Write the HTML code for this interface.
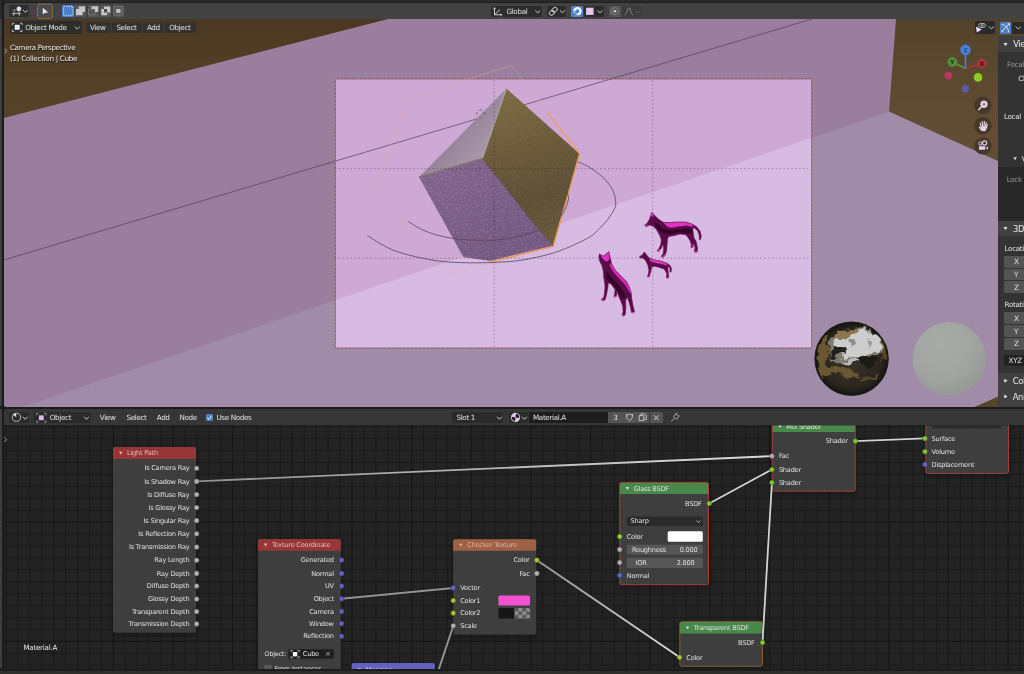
<!DOCTYPE html><html><head><meta charset="utf-8"><title>Blender</title><style>
html,body{margin:0;padding:0;background:#1b1b1b;}
body{width:1024px;height:674px;overflow:hidden;position:relative;font-family:'DejaVu Sans','Liberation Sans',sans-serif;font-size:6.7px;color:#e3e3e3;letter-spacing:-0.05px}
.abs{position:absolute}
svg{position:absolute;left:0;top:0}
svg text{font-family:'DejaVu Sans','Liberation Sans',sans-serif;letter-spacing:-0.22px}
</style></head><body><div id="root" style="position:absolute;left:0;top:0;width:1024px;height:674px;will-change:transform"><svg width="1024" height="410" viewBox="0 0 1024 410"><clipPath id="vpc"><path d="M3.8 18H1030V406.9H6.3a2.5 2.5 0 0 1 -2.5 -2.5Z"/></clipPath><g clip-path="url(#vpc)"><rect x="3.7" y="2.3" width="1021" height="405" fill="#997e9e"/><polygon points="22,407.2 335,300.3 889,111.6 998.5,161.3 1024,172 1024,407.2" fill="#a08ba9"/><defs><linearGradient id="gbl" x1="0" y1="19" x2="0" y2="118" gradientUnits="userSpaceOnUse"><stop offset="0" stop-color="#4a3822"/><stop offset="0.5" stop-color="#513f27"/><stop offset="1" stop-color="#554329"/></linearGradient><linearGradient id="gbr" x1="0" y1="19" x2="0" y2="170" gradientUnits="userSpaceOnUse"><stop offset="0" stop-color="#53422b"/><stop offset="0.6" stop-color="#604c32"/><stop offset="1" stop-color="#624e34"/></linearGradient></defs><polygon points="3.7,19 388,19 3.7,118" fill="url(#gbl)"/><polygon points="896,19 1024,19 1024,173 998.5,161.3 889,111.6" fill="url(#gbr)"/><clipPath id="cam"><rect x="335.7" y="79.2" width="475.5" height="268.2"/></clipPath><g clip-path="url(#cam)"><rect x="335" y="79" width="477" height="269" fill="#cfa9d6"/><polygon points="300,312.2 889,111.6 889,360 300,360" fill="#d8bbe3"/></g><line x1="3.7" y1="260" x2="812" y2="19" stroke="#53405a" stroke-width="0.7"/><rect x="335.3" y="78.8" width="476.4" height="269.3" fill="none" stroke="#4c3a58" stroke-width="0.9" opacity="0.6"/><rect x="335.3" y="78.8" width="476.4" height="269.3" fill="none" stroke="#e08c58" stroke-width="1" stroke-dasharray="1.3,2.6"/><defs><linearGradient id="gol" x1="506" y1="89" x2="556" y2="245" gradientUnits="userSpaceOnUse"><stop offset="0" stop-color="#7d6c44"/><stop offset="0.4" stop-color="#6a5a39"/><stop offset="0.7" stop-color="#5d4e35"/><stop offset="1" stop-color="#6d5d3b"/></linearGradient><linearGradient id="ggr" x1="483" y1="158" x2="440" y2="120" gradientUnits="userSpaceOnUse"><stop offset="0" stop-color="#a997ab"/><stop offset="1" stop-color="#8a798d"/></linearGradient><linearGradient id="gpu" x1="450" y1="165" x2="500" y2="260" gradientUnits="userSpaceOnUse"><stop offset="0" stop-color="#7e6289"/><stop offset="1" stop-color="#73587f"/></linearGradient><filter id="spk" x="0" y="0" width="100%" height="100%"><feTurbulence type="fractalNoise" baseFrequency="0.55" numOctaves="2" seed="3"/><feColorMatrix type="matrix" values="0 0 0 0 0.75  0 0 0 0 0.62  0 0 0 0 0.8  0 0 0 2.2 -1.05"/></filter><clipPath id="cpu"><polygon points="482.3,158.4 534.8,225.0 552.6,245.5 490.0,260.4 463.6,256.8 419.3,176.8"/></clipPath><clipPath id="col"><polygon points="506.2,88.7 578.9,153.6 552.6,245.5 534.8,225.0 482.3,158.4"/></clipPath></defs><polygon points="506.2,88.7 578.9,153.6 552.6,245.5 534.8,225.0 482.3,158.4" fill="url(#gol)" stroke="url(#gol)" stroke-width="0.6" stroke-linejoin="round"/><polygon points="506.2,88.7 482.3,158.4 419.3,176.8" fill="url(#ggr)"/><polygon points="482.3,158.4 534.8,225.0 552.6,245.5 490.0,260.4 463.6,256.8 419.3,176.8" fill="url(#gpu)" stroke="#775b83" stroke-width="0.8" stroke-linejoin="round"/><g clip-path="url(#cpu)"><rect x="415" y="155" width="145" height="110" filter="url(#spk)" opacity="0.3"/></g><g clip-path="url(#col)"><rect x="480" y="85" width="100" height="165" filter="url(#spk)" opacity="0.12"/></g><path d="M506.2 88.7L482.3 158.4" stroke="#a9aaa0" stroke-width="1.4" opacity="0.85"/><path d="M482.3 158.4L419.3 176.8" stroke="#8f8060" stroke-width="1.3" opacity="0.6"/><path d="M482.3 158.4L534.8 225.0L552.6 245.5" stroke="#4c3f30" stroke-width="0.9" opacity="0.5" fill="none"/><polyline points="547.5,112.5 579.8,153.6 553.4,246.4 488.5,262.6" fill="none" stroke="#ee9a50" stroke-width="1.3" stroke-linejoin="round"/><g stroke="#1a0a20" stroke-width="0.9" stroke-dasharray="1.5,2.4" fill="none" opacity="0.36"><line x1="494.2" y1="80" x2="494.2" y2="348"/><line x1="652.7" y1="80" x2="652.7" y2="348"/><line x1="335" y1="168.7" x2="811" y2="168.7"/><line x1="335" y1="258.2" x2="811" y2="258.2"/></g><polyline points="578.9,154 548,113 511.4,65.3 409,97.8 375.7,186.8 446.9,272.7 491.4,262.5" fill="none" stroke="#f0a890" stroke-width="0.8" opacity="0.55"/><path d="M367.3 235.3C369.4 236.7 375.2 240.8 380.0 243.5C384.8 246.2 389.7 248.9 396.0 251.2C402.3 253.5 410.7 255.6 418.0 257.3C425.3 259.0 433.0 260.3 440.0 261.2C447.0 262.1 453.3 262.3 460.0 262.6C466.7 262.9 473.3 262.9 480.0 262.8C486.7 262.7 493.3 262.5 500.0 262.1C506.7 261.7 512.5 261.5 520.0 260.4C527.5 259.3 537.5 257.2 545.0 255.3C552.5 253.4 557.9 251.7 565.2 248.7C572.5 245.7 583.3 240.8 589.0 237.5C594.7 234.2 596.2 231.6 599.3 228.6C602.4 225.6 605.0 222.9 607.5 219.7C610.0 216.5 612.8 212.2 614.2 209.3C615.6 206.4 616.0 205.2 615.7 202.0C615.5 198.8 614.7 194.0 612.7 190.0C610.7 186.0 607.5 181.9 603.8 178.2C600.1 174.5 594.7 170.5 590.4 167.8C586.1 165.1 579.9 162.9 577.8 161.9" fill="none" stroke="#54465a" stroke-width="0.8"/><path d="M408.3 221.6C410.1 222.7 415.1 226.0 419.0 228.0C422.9 230.0 426.8 231.8 431.6 233.4C436.4 235.0 442.5 236.4 448.0 237.5C453.5 238.6 457.1 239.2 464.4 239.7C471.7 240.1 484.4 240.4 491.7 240.2C499.0 240.0 502.5 239.5 508.0 238.6C513.5 237.7 519.3 236.3 524.5 234.8C529.7 233.3 534.4 231.6 539.0 229.5C543.6 227.4 548.0 225.0 551.9 222.5C555.8 220.0 559.6 218.2 562.3 214.5C565.0 210.8 567.3 203.8 568.2 200.4C569.1 197.0 568.1 195.7 567.5 194.0C566.9 192.3 565.0 190.7 564.5 190.0" fill="none" stroke="#54465a" stroke-width="0.8"/><circle cx="480.5" cy="113.6" r="3.8" fill="none" stroke="#5a4456" stroke-width="0.8" stroke-dasharray="1.5,1.5"/><circle cx="480.5" cy="113.6" r="3.8" fill="none" stroke="#f4e8f4" stroke-width="0.8" stroke-dasharray="1.5,1.5" stroke-dashoffset="1.5" opacity="0.75"/><path d="M480.5 108.6v2.6M480.5 116v2.6M475.5 113.6h2.6M482.9 113.6h2.6" stroke="#5a4456" stroke-width="0.5" opacity="0.7"/><g transform="translate(636 205) scale(0.08157)"><path d="M195 90L240 140L290 185L340 215L420 215L520 208L620 210L690 235L740 265L785 320L800 380L790 425L775 420L775 370L755 315L715 280L695 290L700 330L710 400L740 455L755 540L750 575L720 580L715 555L725 530L715 480L700 470L705 500L690 525L670 515L680 490L665 440L640 400L610 365L540 355L470 375L400 385L385 420L380 500L375 560L355 620L330 645L310 630L335 590L340 540L335 480L325 500L300 545L275 570L258 560L285 530L305 480L310 420L290 370L250 300L215 265L170 245L130 265L105 250L140 220L165 175L180 130Z" fill="#5a0c48" stroke="#6a1056" stroke-width="8" stroke-linejoin="round"/><path d="M210 215L260 225L330 290L400 310L520 300L640 285L690 300L690 350L610 345L520 335L420 360L340 350L270 300Z" fill="#2a0422" opacity="0.85"/><path d="M340 222L420 220L520 213L620 214L690 240L705 268L620 252L520 264L440 278L385 268Z" fill="#e232c2"/><path d="M195 92L215 125L200 150L182 130Z" fill="#e232c2"/><path d="M120 252l25 -6M330 632l22 -14M268 558l22 -12M722 572l22 -10M680 512l18 -8" stroke="#e232c2" stroke-width="14" stroke-linecap="round"/></g><g transform="translate(590 245) scale(0.11123)"><path d="M85 80L120 100L170 60L180 110L195 170L230 230L290 290L330 330L355 380L370 430L375 480L385 540L400 600L390 612L372 605L365 560L350 510L335 470L320 500L322 560L318 620L305 640L288 632L298 600L295 550L280 510L262 470L250 440L245 400L240 440L235 465L215 468L222 440L225 400L190 350L165 340L160 380L150 440L135 495L115 500L100 490L125 470L132 420L135 360L125 300L120 240L110 190L85 140L80 100Z" fill="#5a0c48" stroke="#6a1056" stroke-width="6" stroke-linejoin="round"/><path d="M150 230L200 300L260 360L300 420L330 470L290 480L255 430L215 370L170 330L140 290Z" fill="#2a0422" opacity="0.8"/><path d="M88 84L120 104L168 66L176 128L150 150L120 130Z" fill="#e232c2"/><path d="M186 160L230 232L290 292L332 334L356 384L372 440L352 420L318 360L270 310L215 250L175 185Z" fill="#d62ab8"/><path d="M490 62L505 85L530 115L580 135L640 145L690 165L715 180L733 210L728 245L718 240L720 210L705 190L700 215L705 260L708 290L695 300L685 292L692 265L680 235L665 215L620 200L580 190L555 195L548 230L538 268L530 288L515 285L525 262L530 225L520 180L500 140L480 118L450 115L445 105L470 90Z" fill="#5a0c48" stroke="#6a1056" stroke-width="6" stroke-linejoin="round"/><path d="M530 118L580 138L640 148L690 168L700 186L640 170L585 160L545 148Z" fill="#e232c2"/><path d="M108 492l18 2M292 632l16 2M376 606l16 2M218 464l14 0M518 284l12 2M688 294l14 2" stroke="#e232c2" stroke-width="10" stroke-linecap="round"/></g><polygon points="974.5,407 998.5,396.5 1024,386 1024,407" fill="#56452d"/><defs><radialGradient id="gw" cx="0.38" cy="0.3" r="0.8"><stop offset="0" stop-color="#a9aba8"/><stop offset="0.6" stop-color="#a1a3a1"/><stop offset="1" stop-color="#939593"/></radialGradient><radialGradient id="gh" cx="0.5" cy="0.5" r="0.5"><stop offset="0" stop-color="#3a342a"/><stop offset="0.8" stop-color="#2a261e"/><stop offset="0.93" stop-color="#1c1a16"/><stop offset="1" stop-color="#15130f"/></radialGradient><clipPath id="hc"><circle cx="851.6" cy="358.8" r="36.8"/></clipPath><filter id="b1" x="-30%" y="-30%" width="160%" height="160%"><feGaussianBlur stdDeviation="1.6"/></filter></defs><defs><filter id="rag" x="-30%" y="-30%" width="160%" height="160%"><feTurbulence type="fractalNoise" baseFrequency="0.09" numOctaves="3" seed="7" result="t"/><feDisplacementMap in="SourceGraphic" in2="t" scale="14" xChannelSelector="R" yChannelSelector="G"/><feGaussianBlur stdDeviation="0.5"/></filter></defs><circle cx="851.6" cy="358.8" r="36.8" fill="url(#gh)"/><g clip-path="url(#hc)"><g filter="url(#rag)"><ellipse cx="822" cy="358" rx="5" ry="20" fill="#6a5630"/><ellipse cx="840" cy="372" rx="20" ry="4.5" fill="#6a5630" transform="rotate(10 840 372)"/><ellipse cx="868" cy="378" rx="12" ry="2.5" fill="#54452a" transform="rotate(-12 868 378)"/><ellipse cx="884" cy="352" rx="3" ry="12" fill="#5a4828"/><ellipse cx="855" cy="346" rx="28" ry="17" fill="#7e7a70" transform="rotate(-6 855 346)"/><ellipse cx="858" cy="344" rx="24" ry="13" fill="#cdcdcd" transform="rotate(-6 858 344)"/><ellipse cx="846" cy="334" rx="13" ry="4" fill="#8a7650" transform="rotate(-18 846 334)"/><ellipse cx="836" cy="352" rx="7" ry="5" fill="#24221e"/><ellipse cx="851" cy="343" rx="5" ry="3" fill="#8e8e8a"/><ellipse cx="870" cy="340" rx="4" ry="3" fill="#9a9a96"/><ellipse cx="866" cy="362" rx="13" ry="5" fill="#1c1a17"/><ellipse cx="850" cy="362" rx="6" ry="3" fill="#b8b8b6"/></g></g><circle cx="851.6" cy="358.8" r="36.2" fill="none" stroke="#1a1814" stroke-width="2" opacity="0.85"/><circle cx="949.3" cy="358.8" r="36.8" fill="url(#gw)"/></g></svg>
<div class="abs" style="left:0;top:0;width:1024px;height:3.2px;background:linear-gradient(#2b2b2b 0,#2b2b2b 1.5px,#1c1c1c 2.4px)"></div>
<div class="abs" style="left:3.8px;top:3px;width:1021px;height:16px;background:#424242;border-radius:2.5px 0 0 0"></div>
<div class="abs" style="left:0;top:0;width:3.7px;height:674px;background:#1b1b1b"></div>
<div class="abs" style="left:998.4px;top:36.3px;width:26px;height:370.6px;background:#333333"></div>
<div class="abs" style="left:998.4px;top:36.3px;width:26px;height:16px;background:#3f3f3f"></div>
<div class="abs" style="left:998.4px;top:166.9px;width:26px;height:54.6px;background:#282828"></div>
<div class="abs" style="left:9.0px;top:5.2px;width:20.0px;height:11.4px;background:#2f2f2f;border-radius:2.0px;"></div>
<div class="abs" style="left:38.0px;top:4.4px;width:14.0px;height:13.8px;background:#4b4b4b;border-radius:1.5px;"></div>
<div class="abs" style="left:62.4px;top:5.3px;width:11.8px;height:11.5px;background:#4c80cc;border-radius:1.5px;"></div>
<div class="abs" style="left:75.1px;top:5.3px;width:11.2px;height:11.5px;background:#565656;border-radius:0.5px;"></div>
<div class="abs" style="left:87.6px;top:5.3px;width:11.2px;height:11.5px;background:#565656;border-radius:0.5px;"></div>
<div class="abs" style="left:100.1px;top:5.3px;width:11.2px;height:11.5px;background:#565656;border-radius:0.5px;"></div>
<div class="abs" style="left:112.6px;top:5.3px;width:11.2px;height:11.5px;background:#565656;border-radius:1.5px;"></div>
<div class="abs" style="left:490.7px;top:5.5px;width:51.4px;height:11.5px;background:#2c2c2c;border-radius:2.0px;"></div>
<div class="abs" style="left:506.5px;top:7px;font-size:7.20px;line-height:9px;letter-spacing:-0.35px;color:#e3e3e3;white-space:nowrap;">Global</div>
<div class="abs" style="left:547.0px;top:5.5px;width:19.3px;height:11.5px;background:#2c2c2c;border-radius:2.0px;"></div>
<div class="abs" style="left:571.2px;top:5.5px;width:12.0px;height:11.5px;background:#4c80cc;border-radius:1.5px;"></div>
<div class="abs" style="left:583.6px;top:5.5px;width:20.4px;height:11.5px;background:#2c2c2c;border-radius:1.5px;"></div>
<div class="abs" style="left:608.9px;top:5.5px;width:12.1px;height:11.5px;background:#555;border-radius:1.5px;"></div>
<div class="abs" style="left:621.6px;top:5.5px;width:20.1px;height:11.5px;background:#3c3c3c;border-radius:1.5px;"></div>
<div class="abs" style="left:9.9px;top:21.4px;width:72.0px;height:12.4px;background:rgba(44,44,44,0.97);border-radius:2.5px;"></div>
<div class="abs" style="left:25.2px;top:23px;font-size:7.20px;line-height:9px;letter-spacing:-0.35px;color:#e3e3e3;white-space:nowrap;">Object Mode</div>
<div class="abs" style="left:86.0px;top:22.1px;width:24.9px;height:11.3px;background:rgba(50,50,50,0.96);border-radius:2.2px;"></div>
<div class="abs" style="left:89.9px;top:23px;font-size:7.20px;line-height:9px;letter-spacing:-0.35px;color:#e3e3e3;white-space:nowrap;">View</div>
<div class="abs" style="left:112.3px;top:22.1px;width:29.3px;height:11.3px;background:rgba(50,50,50,0.96);border-radius:2.2px;"></div>
<div class="abs" style="left:116.4px;top:23px;font-size:7.20px;line-height:9px;letter-spacing:-0.35px;color:#e3e3e3;white-space:nowrap;">Select</div>
<div class="abs" style="left:143.2px;top:22.1px;width:20.9px;height:11.3px;background:rgba(50,50,50,0.96);border-radius:2.2px;"></div>
<div class="abs" style="left:146.9px;top:23px;font-size:7.20px;line-height:9px;letter-spacing:-0.35px;color:#e3e3e3;white-space:nowrap;">Add</div>
<div class="abs" style="left:165.2px;top:22.1px;width:31.3px;height:11.3px;background:rgba(50,50,50,0.96);border-radius:2.2px;"></div>
<div class="abs" style="left:169.2px;top:23px;font-size:7.20px;line-height:9px;letter-spacing:-0.35px;color:#e3e3e3;white-space:nowrap;">Object</div>
<div class="abs" style="left:9.9px;top:43px;font-size:7.15px;line-height:9px;letter-spacing:-0.35px;color:#f0f0f0;white-space:nowrap;text-shadow:0.5px 0.5px 0.8px rgba(0,0,0,0.9);">Camera Perspective</div>
<div class="abs" style="left:9.9px;top:54px;font-size:7.31px;line-height:9px;letter-spacing:-0.35px;color:#f0f0f0;white-space:nowrap;text-shadow:0.5px 0.5px 0.8px rgba(0,0,0,0.9);">(1) Collection | Cube</div>
<div class="abs" style="left:974.7px;top:21.4px;width:20.6px;height:12.4px;background:#2a2a2a;border-radius:2.0px;"></div>
<div class="abs" style="left:999.8px;top:21.6px;width:11.7px;height:12.1px;background:#4c80cc;border-radius:1.5px;"></div>
<div class="abs" style="left:1011.9px;top:21.6px;width:14.0px;height:12.1px;background:#2a2a2a;border-radius:1.5px;"></div>
<div class="abs" style="left:998.4px;top:221.4px;width:26.0px;height:15.0px;background:#414141;border-radius:0.0px;"></div>
<div class="abs" style="left:998.4px;top:372.8px;width:26.0px;height:34.2px;background:#404040;border-radius:0.0px;"></div>
<div class="abs" style="left:1003.8px;top:255.8px;width:22.0px;height:11.8px;background:#545454;border-radius:1.5px;"></div>
<div class="abs" style="left:1003.8px;top:268.6px;width:22.0px;height:11.8px;background:#545454;border-radius:1.5px;"></div>
<div class="abs" style="left:1003.8px;top:281.4px;width:22.0px;height:11.8px;background:#545454;border-radius:1.5px;"></div>
<div class="abs" style="left:1003.8px;top:312.3px;width:22.0px;height:11.8px;background:#545454;border-radius:1.5px;"></div>
<div class="abs" style="left:1003.8px;top:325.1px;width:22.0px;height:11.8px;background:#545454;border-radius:1.5px;"></div>
<div class="abs" style="left:1003.8px;top:337.9px;width:22.0px;height:11.8px;background:#545454;border-radius:1.5px;"></div>
<div class="abs" style="left:1003.8px;top:354.7px;width:22.0px;height:11.8px;background:#222;border-radius:1.5px;"></div>
<div class="abs" style="left:1013.2px;top:39px;font-size:8.38px;line-height:10px;letter-spacing:-0.41px;color:#e8e8e8;white-space:nowrap;">Vie</div>
<div class="abs" style="left:1013.0px;top:224px;font-size:8.38px;line-height:10px;letter-spacing:-0.41px;color:#e8e8e8;white-space:nowrap;">3D</div>
<div class="abs" style="left:1012.8px;top:376px;font-size:8.38px;line-height:10px;letter-spacing:-0.41px;color:#e8e8e8;white-space:nowrap;">Col</div>
<div class="abs" style="left:1012.8px;top:392px;font-size:8.38px;line-height:10px;letter-spacing:-0.41px;color:#e8e8e8;white-space:nowrap;">Ani</div>
<div class="abs" style="left:1007.0px;top:60px;font-size:7.20px;line-height:9px;letter-spacing:-0.35px;color:#999;white-space:nowrap;">Focal</div>
<div class="abs" style="left:1018.3px;top:74px;font-size:7.20px;line-height:9px;letter-spacing:-0.35px;color:#e3e3e3;white-space:nowrap;">Cl</div>
<div class="abs" style="left:1004.0px;top:112px;font-size:7.20px;line-height:9px;letter-spacing:-0.35px;color:#e3e3e3;white-space:nowrap;">Local</div>
<div class="abs" style="left:1006.8px;top:175px;font-size:7.20px;line-height:9px;letter-spacing:-0.35px;color:#999;white-space:nowrap;">Lock</div>
<div class="abs" style="left:1021.8px;top:155px;font-size:7.74px;line-height:9px;letter-spacing:-0.37px;color:#e3e3e3;white-space:nowrap;">V</div>
<div class="abs" style="left:1004.6px;top:244px;font-size:7.20px;line-height:9px;letter-spacing:-0.35px;color:#e3e3e3;white-space:nowrap;">Locati</div>
<div class="abs" style="left:1004.6px;top:300px;font-size:7.20px;line-height:9px;letter-spacing:-0.35px;color:#e3e3e3;white-space:nowrap;">Rotati</div>
<div class="abs" style="left:1014.0px;top:257px;font-size:7.20px;line-height:9px;letter-spacing:-0.35px;color:#e3e3e3;white-space:nowrap;">X</div>
<div class="abs" style="left:1014.0px;top:270px;font-size:7.20px;line-height:9px;letter-spacing:-0.35px;color:#e3e3e3;white-space:nowrap;">Y</div>
<div class="abs" style="left:1014.0px;top:283px;font-size:7.20px;line-height:9px;letter-spacing:-0.35px;color:#e3e3e3;white-space:nowrap;">Z</div>
<div class="abs" style="left:1014.0px;top:314px;font-size:7.20px;line-height:9px;letter-spacing:-0.35px;color:#e3e3e3;white-space:nowrap;">X</div>
<div class="abs" style="left:1014.0px;top:327px;font-size:7.20px;line-height:9px;letter-spacing:-0.35px;color:#e3e3e3;white-space:nowrap;">Y</div>
<div class="abs" style="left:1014.0px;top:339px;font-size:7.20px;line-height:9px;letter-spacing:-0.35px;color:#e3e3e3;white-space:nowrap;">Z</div>
<div class="abs" style="left:1008.6px;top:356px;font-size:7.20px;line-height:9px;letter-spacing:-0.35px;color:#e3e3e3;white-space:nowrap;">XYZ</div>
<svg width="1024" height="410" viewBox="0 0 1024 410"><circle cx="18.9" cy="8.9" r="2.4" fill="#e8d8ee"/><path d="M11.8 13.4H20.9M13.7 13.4V15.8M19.3 13.4V15.8" stroke="#c8c8c8" stroke-width="0.85"/><path d="M14.4 9.6V13M12.8 10.3l3 -0.6" stroke="#999" stroke-width="0.8"/><path d="M18.9 11.3V13.4" stroke="#ccc" stroke-width="0.8"/><path d="M23.2 10.2l2.2 2.2l2.2 -2.2" stroke="#ddd" stroke-width="0.9" fill="none" stroke-linecap="round"/><rect x="37.6" y="4" width="14.8" height="14.6" rx="1.8" fill="none" stroke="#d8923c" stroke-width="1" stroke-dasharray="1.1,1.1"/><path d="M42.8 7.7V14.6L44.6 12.9L48.2 12.4Z" fill="#f0dff5"/><rect x="63.6" y="6.6" width="9.3" height="8.7" fill="none" stroke="#e8e8ff" stroke-width="0.9" stroke-dasharray="1.2,1.2"/><rect x="75.9" y="9" width="6.7" height="6.2" fill="#c6c6c6"/><rect x="78.7" y="6.3" width="6.4" height="5.6" fill="#c6c6c6"/><path d="M79.5 11.5h0.8M81.5 10h0.8M83.3 8.6h0.8M80.5 13h0.8" stroke="#f0c8f0" stroke-width="0.8"/><path d="M91.5 6.3H98.2V11.9H95V9H91.5Z" fill="#c6c6c6"/><rect x="88.5" y="9.2" width="6.3" height="5.8" fill="none" stroke="#aaa" stroke-width="0.7" stroke-dasharray="0.9,1.1"/><path d="M104 6.6H110.3V12.5H107.2V15.2H101.3V9H104Z" fill="#c6c6c6"/><rect x="104" y="9" width="3.2" height="3.5" fill="#4a4a4a"/><rect x="113.8" y="6.7" width="9" height="8.4" fill="none" stroke="#aaa" stroke-width="0.7" stroke-dasharray="0.9,1.1"/><rect x="116.2" y="9" width="4.3" height="3.9" fill="#c0c0c0"/><path d="M494.5 8V14.8H501.5M494.5 14.8L500 9.5" stroke="#ddd" stroke-width="0.9" fill="none"/><path d="M493.3 9.2L494.5 7.4L495.7 9.2M500.3 13.6L502.1 14.8L500.3 16" stroke="#ddd" stroke-width="0.7" fill="none"/><path d="M535.5 10.7l2.2 2.2l2.2 -2.2" stroke="#ddd" stroke-width="0.9" fill="none" stroke-linecap="round"/><ellipse cx="554.6" cy="9.8" rx="2.8" ry="2.2" transform="rotate(-35 554.6 9.8)" fill="none" stroke="#ddd" stroke-width="0.9"/><ellipse cx="551.9" cy="12.8" rx="2.8" ry="2.2" transform="rotate(-35 551.9 12.8)" fill="none" stroke="#ddd" stroke-width="0.9"/><path d="M560.3 10.7l2.2 2.2l2.2 -2.2" stroke="#ddd" stroke-width="0.9" fill="none" stroke-linecap="round"/><path d="M574.3 11.2A3.1 3.1 0 1 1 577.4 14.3" fill="none" stroke="#fff" stroke-width="2.2"/><path d="M573.2 12.4h2.2M576.2 13.2v2.2" stroke="#dde6f5" stroke-width="0.9"/><rect x="586" y="7.7" width="7.6" height="7.2" fill="#e0c0e8"/><path d="M588 9.5h1M591 9.5h1M589.5 11.3h1M588 13.1h1M591 13.1h1" stroke="#fff" stroke-width="0.9"/><path d="M597.8 10.7l2.2 2.2l2.2 -2.2" stroke="#ddd" stroke-width="0.9" fill="none" stroke-linecap="round"/><circle cx="614.9" cy="11.2" r="3.6" fill="none" stroke="#888" stroke-width="0.8"/><circle cx="614.9" cy="11.2" r="1.3" fill="#ccc"/><path d="M624.5 14.8C627.5 14.8 627 7.8 628.9 7.8C630.8 7.8 630.3 14.8 633.3 14.8" fill="none" stroke="#8a8a8a" stroke-width="0.9"/><path d="M635.6 10.7l2.2 2.2l2.2 -2.2" stroke="#666" stroke-width="0.9" fill="none" stroke-linecap="round"/><rect x="14.7" y="24.8" width="5" height="5" fill="#f4e8f8"/><path d="M12.3 25.2V23.2H14.3M20 23.2H22V25.2M22 29.5V31.5H20M14.3 31.5H12.3V29.5" stroke="#ccc" stroke-width="0.9" fill="none"/><path d="M75.0 26.9l2.2 2.2l2.2 -2.2" stroke="#ddd" stroke-width="0.9" fill="none" stroke-linecap="round"/><path d="M4.6 48.8l2.2 2.3l-2.2 2.3" stroke="#bbb" stroke-width="0.8" fill="none"/><ellipse cx="982.1" cy="25.4" rx="3.5" ry="2.1" fill="none" stroke="#d8d8d8" stroke-width="0.8"/><circle cx="982.1" cy="25.4" r="1" fill="none" stroke="#d8d8d8" stroke-width="0.7"/><path d="M975.9 26.6L976.8 32.6L981.8 29.6Z" fill="#eadcf0"/><path d="M989.2 26.7l2.2 2.2l2.2 -2.2" stroke="#ddd" stroke-width="0.9" fill="none" stroke-linecap="round"/><path d="M1002 31.3L1009 24" stroke="#e8e0d8" stroke-width="1" fill="none"/><path d="M1007.3 23.4L1010.2 23L1009.8 26Z" fill="#f0c8f0"/><path d="M1001.2 32.3l0.4 -2.3l1.9 1.9z" fill="#e8d0e8"/><path d="M1001.6 24.4C1005.8 25 1008.3 28 1008.6 32.2" stroke="#e4dcd0" stroke-width="1" fill="none"/><path d="M1016.1 26.9l2.2 2.2l2.2 -2.2" stroke="#ddd" stroke-width="0.9" fill="none" stroke-linecap="round"/><path d="M965.5 68.5V52" stroke="#4a7fd6" stroke-width="1.6"/><path d="M965.5 68.5L954 63" stroke="#5a9a3a" stroke-width="1.6"/><path d="M965.5 68.5L980 64" stroke="#b03040" stroke-width="1.6"/><circle cx="965.5" cy="49.9" r="5.3" fill="#487fd0"/><circle cx="952.3" cy="62" r="5" fill="#4f8c3c"/><circle cx="981.9" cy="63.5" r="5" fill="#a4343f"/><circle cx="948.3" cy="75.6" r="3.9" fill="#c83468" opacity="0.9"/><circle cx="978" cy="77.4" r="4.3" fill="#8ccc22"/><circle cx="965.2" cy="88.7" r="3.7" fill="#5c5eb4" opacity="0.9"/><text x="965.5" y="52" font-size="5.5" text-anchor="middle" fill="#1a3a70">Z</text><text x="952.3" y="64.2" font-size="5.8" text-anchor="middle" fill="#16380f" font-weight="bold">Y</text><text x="981.9" y="65.6" font-size="5.8" text-anchor="middle" fill="#3a0a10" font-weight="bold">X</text><circle cx="982.9" cy="105.3" r="8.7" fill="#45372a"/><circle cx="982.9" cy="125.7" r="8.7" fill="#45372a"/><circle cx="982.9" cy="145.9" r="8.7" fill="#45372a"/><circle cx="984" cy="104.2" r="3.2" fill="#e6cce8" stroke="#f4ecf4" stroke-width="0.9"/><path d="M981.7 106.6L978.7 109.8" stroke="#e8e0e8" stroke-width="1.4" stroke-linecap="round"/><path d="M982.3 104.2h3.4M984 102.6v3.2" stroke="#6a5a6a" stroke-width="0.8"/><path d="M979.3 127.2L981 129.8Q983 131.4 985.2 130.2L986.6 127.6L987.2 124.4M981.2 127.6L980.2 123.2M982.6 126.6L982.2 121.6M984 126.6L984.4 121.4M985.4 127L986.2 122.6" stroke="#e2d8e4" stroke-width="1.15" fill="none" stroke-linecap="round" stroke-linejoin="round"/><path d="M980.6 126.4L986.6 126.6L985.4 130.2Q983 131.4 981 129.8Z" fill="#e6cce8"/><circle cx="980.3" cy="143.6" r="1.6" fill="none" stroke="#e6cce8" stroke-width="1"/><circle cx="984.6" cy="143" r="2.1" fill="none" stroke="#e6cce8" stroke-width="1.1"/><rect x="979" y="146.2" width="6.2" height="3.6" rx="0.6" fill="#e6cce8"/><path d="M985.6 148L988 146.4V149.6Z" fill="#e6cce8"/><path d="M1003.5 43l4 0l-2 3.2z" fill="#ddd"/><path d="M1003.5 227l4 0l-2 3.2z" fill="#ddd"/><path d="M1013.3 157.3l3.6 0l-1.8 3z" fill="#ddd"/><path d="M1004.2 378.8v4l3.4-2zM1004.2 394.5v4l3.4-2z" fill="#ddd"/></svg>
<div class="abs" style="left:0;top:406.9px;width:1024px;height:268px;background:#1b1b1b"></div>
<div class="abs" style="left:3.7px;top:409.4px;width:1021px;height:260px;background:#232323;border-radius:2px"></div>
<svg width="1024" height="674" viewBox="0 0 1024 674"><clipPath id="nec"><rect x="3.7" y="425.5" width="1021" height="243.9"/></clipPath><g clip-path="url(#nec)"><path d="M6.01 425V670M17.94 425V670M29.87 425V670M41.80 425V670M65.66 425V670M77.59 425V670M89.52 425V670M101.45 425V670M125.31 425V670M137.24 425V670M149.17 425V670M161.10 425V670M184.96 425V670M196.89 425V670M208.82 425V670M220.75 425V670M244.61 425V670M256.54 425V670M268.47 425V670M280.40 425V670M304.26 425V670M316.19 425V670M328.12 425V670M340.05 425V670M363.91 425V670M375.84 425V670M387.77 425V670M399.70 425V670M423.56 425V670M435.49 425V670M447.42 425V670M459.35 425V670M483.21 425V670M495.14 425V670M507.07 425V670M519.00 425V670M542.86 425V670M554.79 425V670M566.72 425V670M578.65 425V670M602.51 425V670M614.44 425V670M626.37 425V670M638.30 425V670M662.16 425V670M674.09 425V670M686.02 425V670M697.95 425V670M721.81 425V670M733.74 425V670M745.67 425V670M757.60 425V670M781.46 425V670M793.39 425V670M805.32 425V670M817.25 425V670M841.11 425V670M853.04 425V670M864.97 425V670M876.90 425V670M900.76 425V670M912.69 425V670M924.62 425V670M936.55 425V670M960.41 425V670M972.34 425V670M984.27 425V670M996.20 425V670M1020.06 425V670M3.7 426.67H1024M3.7 438.60H1024M3.7 450.53H1024M3.7 474.39H1024M3.7 486.32H1024M3.7 498.25H1024M3.7 510.18H1024M3.7 534.04H1024M3.7 545.97H1024M3.7 557.90H1024M3.7 569.83H1024M3.7 593.69H1024M3.7 605.62H1024M3.7 617.55H1024M3.7 629.48H1024M3.7 653.34H1024M3.7 665.27H1024" stroke="#1b1b1b" stroke-width="1" fill="none"/><path d="M53.73 425V670M113.38 425V670M173.03 425V670M232.68 425V670M292.33 425V670M351.98 425V670M411.63 425V670M471.28 425V670M530.93 425V670M590.58 425V670M650.23 425V670M709.88 425V670M769.53 425V670M829.18 425V670M888.83 425V670M948.48 425V670M1008.13 425V670M3.7 462.46H1024M3.7 522.11H1024M3.7 581.76H1024M3.7 641.41H1024" stroke="#171717" stroke-width="1.1" fill="none"/><defs><filter id="blur" x="-20%" y="-20%" width="140%" height="140%"><feGaussianBlur stdDeviation="2.5"/></filter></defs><rect x="112.0" y="447.9" width="85.1" height="187.9" rx="3" fill="#000" opacity="0.28" filter="url(#blur)"/><rect x="113.0" y="446.9" width="83.1" height="185.9" rx="2" fill="#3e3e3e"/><path d="M113.0 459.1V448.9a2 2 0 0 1 2 -2H194.1a2 2 0 0 1 2 2V459.1Z" fill="#963636"/><path d="M119.0 451.8h3.4l-1.7 2.8z" fill="#e8bcbc"/><text x="127.0" y="455.3" font-size="6.60" text-anchor="start" fill="#e8bcbc">Light Path</text><rect x="256.9" y="540.0" width="84.9" height="143.0" rx="3" fill="#000" opacity="0.28" filter="url(#blur)"/><rect x="257.9" y="539.0" width="82.9" height="141.0" rx="2" fill="#3e3e3e"/><path d="M257.9 550.7V541.0a2 2 0 0 1 2 -2H338.8a2 2 0 0 1 2 2V550.7Z" fill="#963636"/><path d="M263.9 543.6h3.4l-1.7 2.8z" fill="#e8bcbc"/><text x="271.9" y="547.1" font-size="6.60" text-anchor="start" fill="#e8bcbc">Texture Coordinate</text><rect x="350.7" y="663.9" width="85.1" height="29.1" rx="3" fill="#000" opacity="0.28" filter="url(#blur)"/><rect x="351.7" y="662.9" width="83.1" height="27.1" rx="2" fill="#3e3e3e"/><path d="M351.7 676.0V664.9a2 2 0 0 1 2 -2H432.8a2 2 0 0 1 2 2V676.0Z" fill="#6460c0"/><path d="M357.7 668.2h3.4l-1.7 2.8z" fill="#d0ccf0"/><text x="365.7" y="671.8" font-size="6.60" text-anchor="start" fill="#d0ccf0">Mapping</text><rect x="452.1" y="540.2" width="85.1" height="97.5" rx="3" fill="#000" opacity="0.28" filter="url(#blur)"/><rect x="453.1" y="539.2" width="83.1" height="95.5" rx="2" fill="#3e3e3e"/><path d="M453.1 550.7V541.2a2 2 0 0 1 2 -2H534.2a2 2 0 0 1 2 2V550.7Z" fill="#a06044"/><path d="M459.1 543.8h3.4l-1.7 2.8z" fill="#dcb4ac"/><text x="467.1" y="547.2" font-size="6.60" text-anchor="start" fill="#dcb4ac">Checker Texture</text><rect x="618.7" y="483.4" width="90.8" height="104.3" rx="3" fill="#000" opacity="0.28" filter="url(#blur)"/><rect x="619.7" y="482.4" width="88.8" height="102.3" rx="2" fill="#3e3e3e"/><path d="M619.7 494.1V484.4a2 2 0 0 1 2 -2H706.5a2 2 0 0 1 2 2V494.1Z" fill="#48884a"/><rect x="619.7" y="482.4" width="88.8" height="102.3" rx="2" fill="none" stroke="#b44238" stroke-width="0.9"/><path d="M625.7 487.1h3.4l-1.7 2.8z" fill="#dce4dc"/><text x="633.7" y="490.6" font-size="6.60" text-anchor="start" fill="#dce4dc">Glass BSDF</text><rect x="771.3" y="421.8" width="84.9" height="72.4" rx="3" fill="#000" opacity="0.28" filter="url(#blur)"/><rect x="772.3" y="420.8" width="82.9" height="70.4" rx="2" fill="#3e3e3e"/><path d="M772.3 432.0V422.8a2 2 0 0 1 2 -2H853.2a2 2 0 0 1 2 2V432.0Z" fill="#48884a"/><rect x="772.3" y="420.8" width="82.9" height="70.4" rx="2" fill="none" stroke="#b04434" stroke-width="0.9"/><path d="M778.3 425.2h3.4l-1.7 2.8z" fill="#dce4dc"/><text x="786.3" y="428.7" font-size="6.60" text-anchor="start" fill="#dce4dc">Mix Shader</text><rect x="924.8" y="381.0" width="84.7" height="95.5" rx="3" fill="#000" opacity="0.28" filter="url(#blur)"/><rect x="925.8" y="380.0" width="82.7" height="93.5" rx="2" fill="#3e3e3e"/><path d="M925.8 381.0V382.0a2 2 0 0 1 2 -2H1006.5a2 2 0 0 1 2 2V381.0Z" fill="#963636"/><rect x="925.8" y="380.0" width="82.7" height="93.5" rx="2" fill="none" stroke="#b44238" stroke-width="0.9"/><rect x="678.8" y="622.7" width="84.7" height="46.6" rx="3" fill="#000" opacity="0.28" filter="url(#blur)"/><rect x="679.8" y="621.7" width="82.7" height="44.6" rx="2" fill="#3e3e3e"/><path d="M679.8 633.5V623.7a2 2 0 0 1 2 -2H760.5a2 2 0 0 1 2 2V633.5Z" fill="#48884a"/><rect x="679.8" y="621.7" width="82.7" height="44.6" rx="2" fill="none" stroke="#8c6630" stroke-width="0.9"/><path d="M685.8 626.4h3.4l-1.7 2.8z" fill="#dce4dc"/><text x="693.8" y="629.9" font-size="6.60" text-anchor="start" fill="#dce4dc">Transparent BSDF</text><path d="M196.6 481.4L771.9 456.1" stroke="#141414" stroke-width="3.2" fill="none" opacity="0.35"/><linearGradient id="lg1" gradientUnits="userSpaceOnUse" x1="196.6" y1="481.4" x2="771.9" y2="456.1"><stop offset="0" stop-color="#909090"/><stop offset="1" stop-color="#dcdcdc"/></linearGradient><path d="M196.6 481.4L771.9 456.1" stroke="url(#lg1)" stroke-width="1.9" fill="none"/><path d="M341.5 598.8L453.3 587.9" stroke="#141414" stroke-width="3.2" fill="none" opacity="0.35"/><path d="M341.5 598.8L453.3 587.9" stroke="#929292" stroke-width="2.0" fill="none"/><path d="M453.3 625.7L438.2 671.0" stroke="#141414" stroke-width="3.2" fill="none" opacity="0.35"/><path d="M453.3 625.7L438.2 671.0" stroke="#929292" stroke-width="2.0" fill="none"/><path d="M536.8 560.1L679.6 657.3" stroke="#141414" stroke-width="3.2" fill="none" opacity="0.35"/><linearGradient id="lg2" gradientUnits="userSpaceOnUse" x1="536.8" y1="560.1" x2="679.6" y2="657.3"><stop offset="0" stop-color="#909090"/><stop offset="1" stop-color="#dcdcdc"/></linearGradient><path d="M536.8 560.1L679.6 657.3" stroke="url(#lg2)" stroke-width="1.9" fill="none"/><path d="M709.2 503.5L771.9 469.5" stroke="#141414" stroke-width="3.2" fill="none" opacity="0.35"/><path d="M709.2 503.5L771.9 469.5" stroke="#d2d2d2" stroke-width="1.8" fill="none"/><path d="M762.5 642.5L771.9 482.6" stroke="#141414" stroke-width="3.2" fill="none" opacity="0.35"/><path d="M762.5 642.5L771.9 482.6" stroke="#d2d2d2" stroke-width="1.8" fill="none"/><path d="M855.4 441.1L925.0 438.4" stroke="#141414" stroke-width="3.2" fill="none" opacity="0.35"/><path d="M855.4 441.1L925.0 438.4" stroke="#d2d2d2" stroke-width="1.8" fill="none"/><text x="189.4" y="470.4" font-size="6.60" text-anchor="end" fill="#e0e0e0">Is Camera Ray</text><circle cx="196.6" cy="468.2" r="2.55" fill="#b0b0b0" stroke="#1c1c1c" stroke-width="0.4"/><text x="189.4" y="483.6" font-size="6.60" text-anchor="end" fill="#e0e0e0">Is Shadow Ray</text><circle cx="196.6" cy="481.4" r="2.55" fill="#b0b0b0" stroke="#1c1c1c" stroke-width="0.4"/><text x="189.4" y="496.7" font-size="6.60" text-anchor="end" fill="#e0e0e0">Is Diffuse Ray</text><circle cx="196.6" cy="494.5" r="2.55" fill="#b0b0b0" stroke="#1c1c1c" stroke-width="0.4"/><text x="189.4" y="509.8" font-size="6.60" text-anchor="end" fill="#e0e0e0">Is Glossy Ray</text><circle cx="196.6" cy="507.6" r="2.55" fill="#b0b0b0" stroke="#1c1c1c" stroke-width="0.4"/><text x="189.4" y="522.8" font-size="6.60" text-anchor="end" fill="#e0e0e0">Is Singular Ray</text><circle cx="196.6" cy="520.6" r="2.55" fill="#b0b0b0" stroke="#1c1c1c" stroke-width="0.4"/><text x="189.4" y="536.0" font-size="6.60" text-anchor="end" fill="#e0e0e0">Is Reflection Ray</text><circle cx="196.6" cy="533.8" r="2.55" fill="#b0b0b0" stroke="#1c1c1c" stroke-width="0.4"/><text x="189.4" y="549.2" font-size="6.60" text-anchor="end" fill="#e0e0e0">Is Transmission Ray</text><circle cx="196.6" cy="547.0" r="2.55" fill="#b0b0b0" stroke="#1c1c1c" stroke-width="0.4"/><text x="189.4" y="562.4" font-size="6.60" text-anchor="end" fill="#e0e0e0">Ray Length</text><circle cx="196.6" cy="560.2" r="2.55" fill="#b0b0b0" stroke="#1c1c1c" stroke-width="0.4"/><text x="189.4" y="575.6" font-size="6.60" text-anchor="end" fill="#e0e0e0">Ray Depth</text><circle cx="196.6" cy="573.4" r="2.55" fill="#b0b0b0" stroke="#1c1c1c" stroke-width="0.4"/><text x="189.4" y="588.2" font-size="6.60" text-anchor="end" fill="#e0e0e0">Diffuse Depth</text><circle cx="196.6" cy="586.0" r="2.55" fill="#b0b0b0" stroke="#1c1c1c" stroke-width="0.4"/><text x="189.4" y="601.2" font-size="6.60" text-anchor="end" fill="#e0e0e0">Glossy Depth</text><circle cx="196.6" cy="599.0" r="2.55" fill="#b0b0b0" stroke="#1c1c1c" stroke-width="0.4"/><text x="189.4" y="613.7" font-size="6.60" text-anchor="end" fill="#e0e0e0">Transparent Depth</text><circle cx="196.6" cy="611.5" r="2.55" fill="#b0b0b0" stroke="#1c1c1c" stroke-width="0.4"/><text x="189.4" y="626.1" font-size="6.60" text-anchor="end" fill="#e0e0e0">Transmission Depth</text><circle cx="196.6" cy="623.9" r="2.55" fill="#b0b0b0" stroke="#1c1c1c" stroke-width="0.4"/><text x="333.8" y="562.3" font-size="6.60" text-anchor="end" fill="#e0e0e0">Generated</text><circle cx="341.5" cy="560.1" r="2.55" fill="#6363c7" stroke="#1c1c1c" stroke-width="0.4"/><text x="333.8" y="575.6" font-size="6.60" text-anchor="end" fill="#e0e0e0">Normal</text><circle cx="341.5" cy="573.4" r="2.55" fill="#6363c7" stroke="#1c1c1c" stroke-width="0.4"/><text x="333.8" y="588.2" font-size="6.60" text-anchor="end" fill="#e0e0e0">UV</text><circle cx="341.5" cy="586.0" r="2.55" fill="#6363c7" stroke="#1c1c1c" stroke-width="0.4"/><text x="333.8" y="601.0" font-size="6.60" text-anchor="end" fill="#e0e0e0">Object</text><circle cx="341.5" cy="598.8" r="2.55" fill="#6363c7" stroke="#1c1c1c" stroke-width="0.4"/><text x="333.8" y="613.6" font-size="6.60" text-anchor="end" fill="#e0e0e0">Camera</text><circle cx="341.5" cy="611.4" r="2.55" fill="#6363c7" stroke="#1c1c1c" stroke-width="0.4"/><text x="333.8" y="625.8" font-size="6.60" text-anchor="end" fill="#e0e0e0">Window</text><circle cx="341.5" cy="623.6" r="2.55" fill="#6363c7" stroke="#1c1c1c" stroke-width="0.4"/><text x="333.8" y="638.4" font-size="6.60" text-anchor="end" fill="#e0e0e0">Reflection</text><circle cx="341.5" cy="636.2" r="2.55" fill="#6363c7" stroke="#1c1c1c" stroke-width="0.4"/><text x="264.6" y="656.2" font-size="6.40" text-anchor="start" fill="#e0e0e0">Object:</text><rect x="288.4" y="649.2" width="45.4" height="9.6" rx="1.5" fill="#1f1f1f"/><rect x="292.9" y="652" width="4.4" height="4.4" fill="#fff"/><path d="M291 652.2V650.4H292.8M297.4 650.4H299.2V652.2M299.2 656V657.8H297.4M292.8 657.8H291V656" stroke="#ccc" stroke-width="0.8" fill="none"/><text x="302.8" y="656.2" font-size="6.60" text-anchor="start" fill="#e0e0e0">Cube</text><path d="M326.2 651.9l3.6 3.8m0 -3.8l-3.6 3.8" stroke="#ccc" stroke-width="0.7"/><rect x="264.2" y="665" width="7.5" height="6" rx="1" fill="#5a5a5a"/><text x="274.6" y="671.2" font-size="6.60" text-anchor="start" fill="#e0e0e0">From Instancer</text><text x="529.6" y="562.3" font-size="6.60" text-anchor="end" fill="#e0e0e0">Color</text><circle cx="536.8" cy="560.1" r="2.55" fill="#a5c730" stroke="#1c1c1c" stroke-width="0.4"/><text x="529.6" y="575.6" font-size="6.60" text-anchor="end" fill="#e0e0e0">Fac</text><circle cx="536.8" cy="573.4" r="2.55" fill="#b0b0b0" stroke="#1c1c1c" stroke-width="0.4"/><text x="460.2" y="590.1" font-size="6.60" text-anchor="start" fill="#e0e0e0">Vector</text><circle cx="453.3" cy="587.9" r="2.55" fill="#6363c7" stroke="#1c1c1c" stroke-width="0.4"/><text x="460.2" y="602.7" font-size="6.60" text-anchor="start" fill="#e0e0e0">Color1</text><circle cx="453.3" cy="600.5" r="2.55" fill="#a5c730" stroke="#1c1c1c" stroke-width="0.4"/><text x="460.2" y="615.3" font-size="6.60" text-anchor="start" fill="#e0e0e0">Color2</text><circle cx="453.3" cy="613.1" r="2.55" fill="#a5c730" stroke="#1c1c1c" stroke-width="0.4"/><text x="460.2" y="627.9" font-size="6.60" text-anchor="start" fill="#e0e0e0">Scale</text><circle cx="453.3" cy="625.7" r="2.55" fill="#b0b0b0" stroke="#1c1c1c" stroke-width="0.4"/><rect x="498.4" y="595.4" width="31.6" height="10.2" rx="1.5" fill="#f252d2"/><rect x="498.4" y="608" width="31.6" height="10.5" rx="1.5" fill="#161616"/><g><rect x="514.5" y="608" width="15.5" height="10.5" rx="1.5" fill="#8c8c8c"/><path d="M514.5 608h3.9v3.5h-3.9zM522.3 608h3.9v3.5h-3.9zM518.4 611.5h3.9v3.5h-3.9zM526.2 611.5h3.8v3.5h-3.8zM514.5 615h3.9v3.5h-3.9zM522.3 615h3.9v3.5h-3.9z" fill="#5a5a5a"/></g><text x="701.6" y="505.7" font-size="6.60" text-anchor="end" fill="#e0e0e0">BSDF</text><circle cx="709.2" cy="503.5" r="2.55" fill="#7fc634" stroke="#1c1c1c" stroke-width="0.4"/><rect x="626.9" y="516.4" width="75.9" height="9.6" rx="1.5" fill="#2a2a2a"/><text x="630.6" y="523.4" font-size="6.60" text-anchor="start" fill="#e0e0e0">Sharp</text><path d="M696.6 520.6l1.9 1.9l1.9 -1.9" stroke="#ddd" stroke-width="0.8" fill="none"/><text x="626.7" y="538.7" font-size="6.60" text-anchor="start" fill="#e0e0e0">Color</text><circle cx="619.7" cy="536.5" r="2.55" fill="#a5c730" stroke="#1c1c1c" stroke-width="0.4"/><rect x="667.7" y="531.3" width="35.1" height="10.5" rx="1.5" fill="#ffffff"/><rect x="626.9" y="544.8" width="75.9" height="9.6" rx="1.5" fill="#565656"/><text x="632.0" y="551.8" font-size="6.60" text-anchor="start" fill="#e0e0e0">Roughness</text><text x="697.5" y="551.8" font-size="6.60" text-anchor="end" fill="#e0e0e0">0.000</text><circle cx="619.7" cy="549.5" r="2.55" fill="#b0b0b0" stroke="#1c1c1c" stroke-width="0.4"/><rect x="626.9" y="557.8" width="75.9" height="10.1" rx="1.5" fill="#565656"/><text x="635.5" y="565.1" font-size="6.60" text-anchor="start" fill="#e0e0e0">IOR</text><text x="694.5" y="565.1" font-size="6.60" text-anchor="end" fill="#e0e0e0">2.800</text><circle cx="619.7" cy="562.5" r="2.55" fill="#b0b0b0" stroke="#1c1c1c" stroke-width="0.4"/><text x="626.7" y="577.5" font-size="6.60" text-anchor="start" fill="#e0e0e0">Normal</text><circle cx="619.7" cy="575.3" r="2.55" fill="#6363c7" stroke="#1c1c1c" stroke-width="0.4"/><text x="847.8" y="443.3" font-size="6.60" text-anchor="end" fill="#e0e0e0">Shader</text><circle cx="855.4" cy="441.1" r="2.55" fill="#7fc634" stroke="#1c1c1c" stroke-width="0.4"/><text x="778.9" y="458.3" font-size="6.60" text-anchor="start" fill="#e0e0e0">Fac</text><circle cx="771.9" cy="456.1" r="2.55" fill="#b0b0b0" stroke="#1c1c1c" stroke-width="0.4"/><text x="778.9" y="471.7" font-size="6.60" text-anchor="start" fill="#e0e0e0">Shader</text><circle cx="771.9" cy="469.5" r="2.55" fill="#7fc634" stroke="#1c1c1c" stroke-width="0.4"/><text x="778.9" y="484.8" font-size="6.60" text-anchor="start" fill="#e0e0e0">Shader</text><circle cx="771.9" cy="482.6" r="2.55" fill="#7fc634" stroke="#1c1c1c" stroke-width="0.4"/><rect x="932" y="420" width="69.5" height="8.5" rx="1.5" fill="#2a2a2a"/><text x="931.6" y="440.6" font-size="6.60" text-anchor="start" fill="#e0e0e0">Surface</text><circle cx="925.0" cy="438.4" r="2.55" fill="#7fc634" stroke="#1c1c1c" stroke-width="0.4"/><text x="931.6" y="453.8" font-size="6.60" text-anchor="start" fill="#e0e0e0">Volume</text><circle cx="925.0" cy="451.6" r="2.55" fill="#7fc634" stroke="#1c1c1c" stroke-width="0.4"/><text x="931.6" y="466.6" font-size="6.60" text-anchor="start" fill="#e0e0e0">Displacement</text><circle cx="925.0" cy="464.4" r="2.55" fill="#6363c7" stroke="#1c1c1c" stroke-width="0.4"/><text x="754.6" y="644.7" font-size="6.60" text-anchor="end" fill="#e0e0e0">BSDF</text><circle cx="762.5" cy="642.5" r="2.55" fill="#7fc634" stroke="#1c1c1c" stroke-width="0.4"/><text x="686.3" y="659.5" font-size="6.60" text-anchor="start" fill="#e0e0e0">Color</text><circle cx="679.6" cy="657.3" r="2.55" fill="#a5c730" stroke="#1c1c1c" stroke-width="0.4"/><text x="23.4" y="650.1" font-size="7.10" text-anchor="start" fill="#e8e8e8">Material.A</text><path d="M4.4 437.4l2.2 2.3l-2.2 2.3" stroke="#bbb" stroke-width="0.8" fill="none"/></g></svg>
<div class="abs" style="left:3.7px;top:409.4px;width:1021px;height:16.1px;background:#363636;border-radius:2px 0 0 0"></div>
<div class="abs" style="left:9.4px;top:412.1px;width:19.8px;height:11.2px;background:#2a2a2a;border-radius:2.0px;"></div>
<div class="abs" style="left:34.3px;top:412.1px;width:56.6px;height:11.2px;background:#2a2a2a;border-radius:2.0px;"></div>
<div class="abs" style="left:49.8px;top:413px;font-size:7.20px;line-height:9px;letter-spacing:-0.35px;color:#e3e3e3;white-space:nowrap;">Object</div>
<div class="abs" style="left:99.8px;top:413px;font-size:7.20px;line-height:9px;letter-spacing:-0.35px;color:#e3e3e3;white-space:nowrap;">View</div>
<div class="abs" style="left:126.5px;top:413px;font-size:7.20px;line-height:9px;letter-spacing:-0.35px;color:#e3e3e3;white-space:nowrap;">Select</div>
<div class="abs" style="left:156.7px;top:413px;font-size:7.20px;line-height:9px;letter-spacing:-0.35px;color:#e3e3e3;white-space:nowrap;">Add</div>
<div class="abs" style="left:179.5px;top:413px;font-size:7.20px;line-height:9px;letter-spacing:-0.35px;color:#e3e3e3;white-space:nowrap;">Node</div>
<div class="abs" style="left:205.7px;top:414.1px;width:7.2px;height:7.2px;background:#4c80cc;border-radius:1.5px;"></div>
<div class="abs" style="left:216.4px;top:413px;font-size:7.20px;line-height:9px;letter-spacing:-0.35px;color:#e3e3e3;white-space:nowrap;">Use Nodes</div>
<div class="abs" style="left:452.2px;top:412.1px;width:51.3px;height:11.2px;background:#2a2a2a;border-radius:2.0px;"></div>
<div class="abs" style="left:456.5px;top:413px;font-size:7.20px;line-height:9px;letter-spacing:-0.35px;color:#e3e3e3;white-space:nowrap;">Slot 1</div>
<div class="abs" style="left:509.0px;top:412.1px;width:19.4px;height:11.2px;background:#2a2a2a;border-radius:2.0px;"></div>
<div class="abs" style="left:528.6px;top:412.1px;width:79.0px;height:11.2px;background:#1d1d1d;border-radius:0.0px;"></div>
<div class="abs" style="left:533.0px;top:413px;font-size:7.20px;line-height:9px;letter-spacing:-0.35px;color:#e3e3e3;white-space:nowrap;">Material.A</div>
<div class="abs" style="left:607.8px;top:412.1px;width:15.0px;height:11.2px;background:#545454;border-radius:0.0px;"></div>
<div class="abs" style="left:613.2px;top:413px;font-size:7.20px;line-height:9px;letter-spacing:-0.35px;color:#e3e3e3;white-space:nowrap;">3</div>
<div class="abs" style="left:623.3px;top:412.1px;width:12.4px;height:11.2px;background:#545454;border-radius:0.0px;"></div>
<div class="abs" style="left:636.2px;top:412.1px;width:13.2px;height:11.2px;background:#545454;border-radius:0.0px;"></div>
<div class="abs" style="left:649.9px;top:412.1px;width:13.0px;height:11.2px;background:#545454;border-radius:0.0px;border-radius:0 2px 2px 0"></div>
<svg width="1024" height="674" viewBox="0 0 1024 674"><circle cx="16.4" cy="417.3" r="4.1" fill="none" stroke="#c8c8c8" stroke-width="0.9"/><path d="M16.4 417.3L13.2 414.9A4.1 4.1 0 0 1 16 413.3Z" fill="#e4e4e4"/><path d="M23.0 417.1l2.2 2.2l2.2 -2.2" stroke="#ddd" stroke-width="0.9" fill="none" stroke-linecap="round"/><rect x="38.9" y="415.4" width="4.8" height="4.8" fill="#dcb6ec"/><path d="M36.7 415.3V413.3H38.7M44 413.3H46V415.3M46 420.2V422.2H44M38.7 422.2H36.7V420.2" stroke="#a8a8a8" stroke-width="0.8" fill="none"/><path d="M84.3 417.1l2.2 2.2l2.2 -2.2" stroke="#ddd" stroke-width="0.9" fill="none" stroke-linecap="round"/><path d="M207.2 417.6l1.6 1.8l2.8 -3.6" stroke="#fff" stroke-width="1" fill="none"/><path d="M497.3 417.1l2.2 2.2l2.2 -2.2" stroke="#ddd" stroke-width="0.9" fill="none" stroke-linecap="round"/><g transform="rotate(8 515.5 417.4)"><circle cx="515.5" cy="417.4" r="4.1" fill="#1c1c1c"/><path d="M515.5 417.4V413.3A4.1 4.1 0 0 0 511.4 417.4ZM515.5 417.4V421.5A4.1 4.1 0 0 0 519.6 417.4Z" fill="#e6c4f6"/><circle cx="515.5" cy="417.4" r="4.1" fill="none" stroke="#cfcfcf" stroke-width="0.9"/></g><path d="M522.3 417.1l2.2 2.2l2.2 -2.2" stroke="#ddd" stroke-width="0.9" fill="none" stroke-linecap="round"/><path d="M626.3 414.5q3.2 0.8 3.2 -0.4q0 1.2 3.2 0.4q0.3 4.6 -3.2 6.4q-3.5 -1.8 -3.2 -6.4z" fill="none" stroke="#ddd" stroke-width="0.8"/><path d="M639.2 415.6h4.6v5h-4.6z" fill="none" stroke="#ddd" stroke-width="0.8"/><path d="M641 415.4v-1.6h3.6l1.6 1.6v4h-2" fill="none" stroke="#ddd" stroke-width="0.8"/><path d="M654 415.3l4.6 4.8m0 -4.8l-4.6 4.8" stroke="#ddd" stroke-width="0.9"/><path d="M675.5 413.5l3.4 3.4M677.6 413.2l-4.3 3l3.4 3.4l2.8 -4.4M674.6 417.8l-3.4 3.8" stroke="#bbb" stroke-width="0.8" fill="none"/></svg>
<div class="abs" style="left:0;top:669.4px;width:1024px;height:6px;background:#1c1c1c"></div>
<div class="abs" style="left:0;top:670.8px;width:1024px;height:4px;background:#2e2e2c"></div>
<div class="abs" style="left:0;top:1.6px;width:3.8px;height:669px;background:#1c1c1c"></div>
<div class="abs" style="left:0;top:0;width:2.2px;height:18.5px;background:#2b2b2b"></div>
<div class="abs" style="left:0;top:18.5px;width:2px;height:387.1px;background:#3e3e3e;border-radius:0 0 1.5px 0"></div>
<div class="abs" style="left:0;top:409px;width:2px;height:259px;background:#3e3e3e;border-radius:0 1.5px 1.5px 0"></div></div></body></html>
